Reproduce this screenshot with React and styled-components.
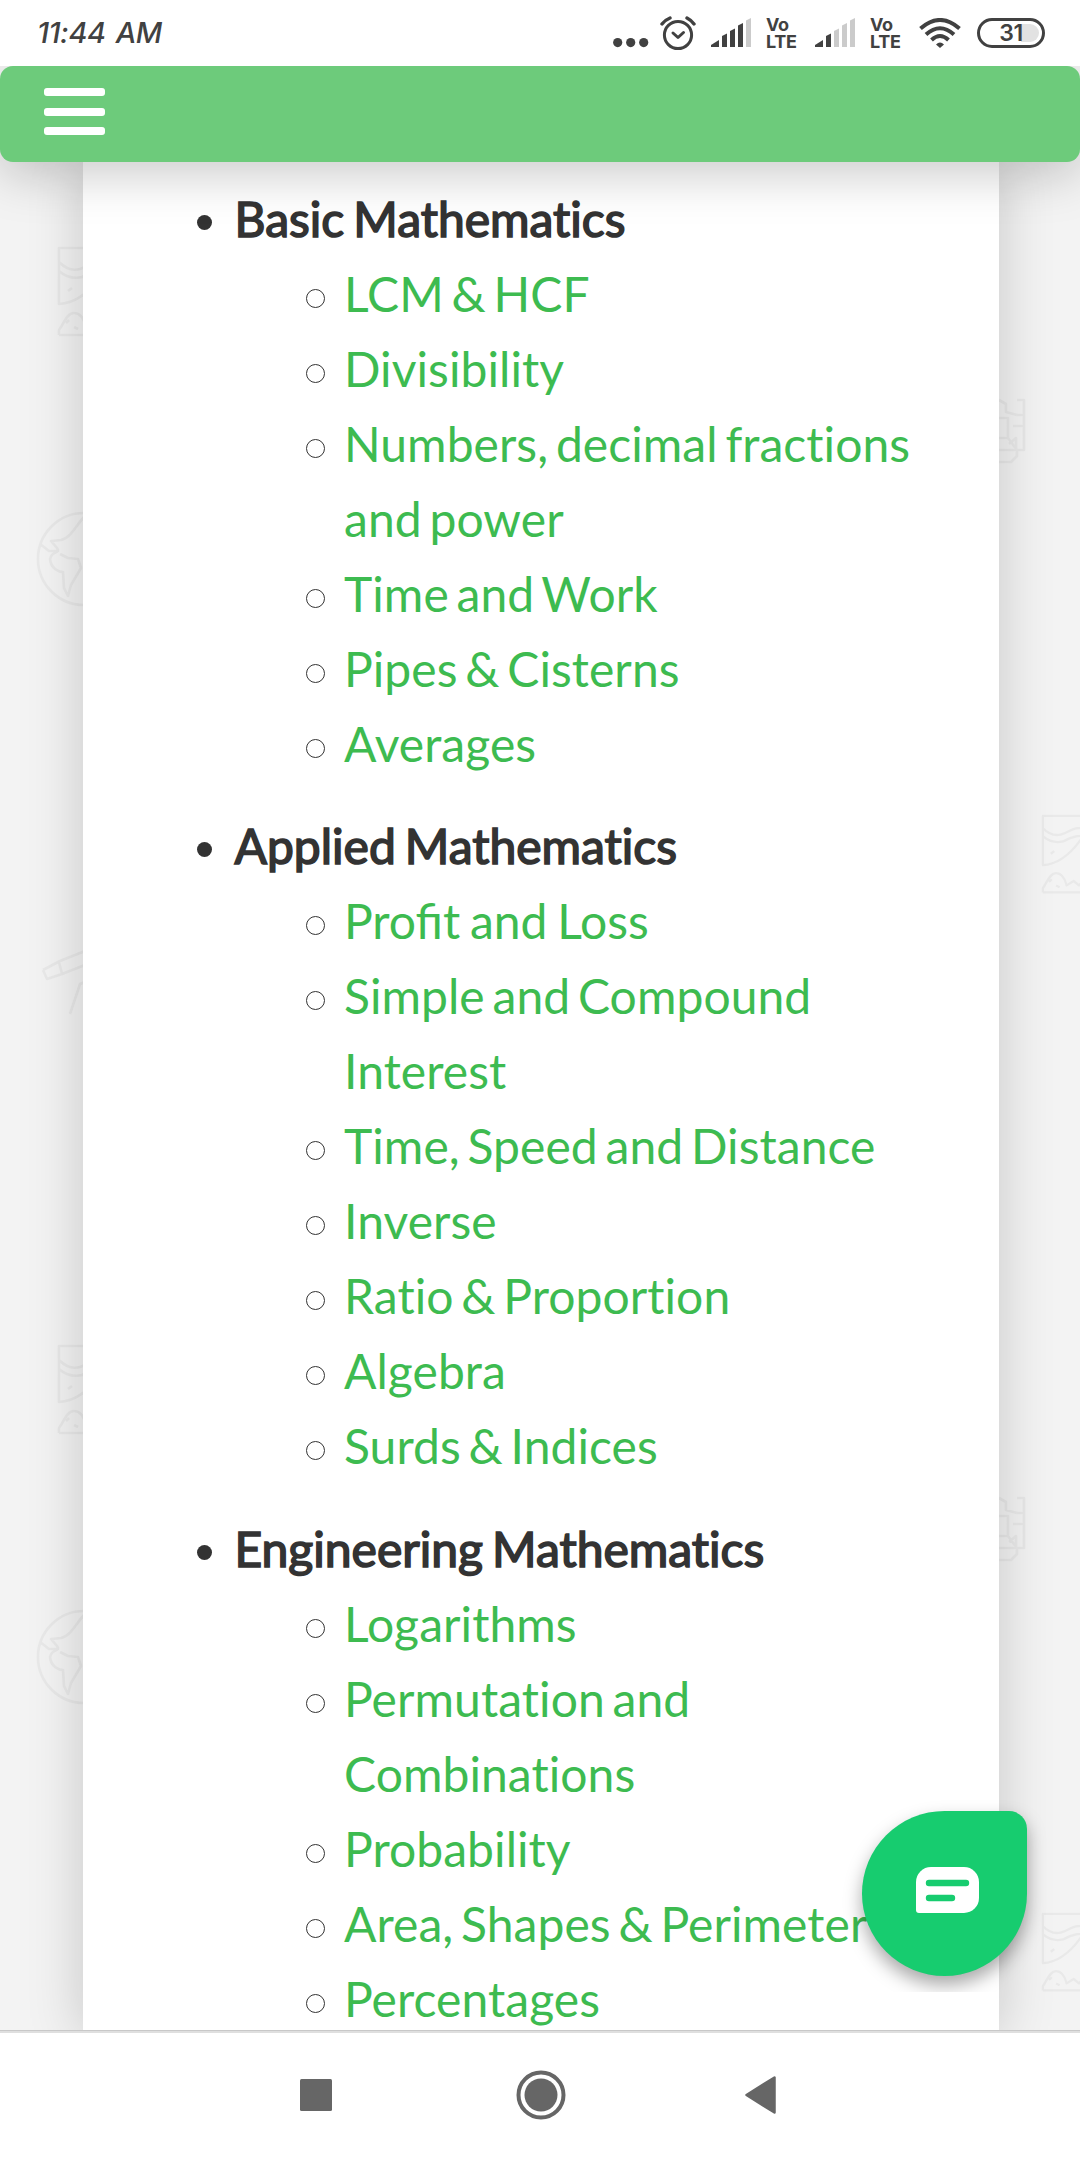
import React from 'react';
import styled, { createGlobalStyle } from 'styled-components';

const GlobalStyle = createGlobalStyle`
  * { box-sizing: border-box; }
  body { margin: 0; background: #fff; font-family: Lato, "Liberation Sans", sans-serif; }
`;

const Screen = styled.div`
  width: 1080px;
  height: 2160px;
  display: flex;
  flex-direction: column;
  overflow: hidden;
  background: #fff;
`;

const StatusBar = styled.div`
  height: 66px;
  flex: none;
  display: flex;
  align-items: flex-start;
  justify-content: space-between;
  padding: 15px 35px 0 37px;
  color: #414141;
`;

const Clock = styled.div`
  font: italic 500 29px/36px Inter, sans-serif;
  letter-spacing: -0.5px;
  word-spacing: 3px;
  white-space: pre;
`;

const Indicators = styled.div`
  display: flex;
  align-items: flex-start;
`;

const Icon = styled.svg`
  display: block;
  flex: none;
  margin-left: ${(p) => p.$gap || 0}px;
  margin-top: ${(p) => p.$drop || 0}px;
`;

const VoLte = styled.div`
  width: 33px;
  margin: 1px 0 0 15px;
  font: 700 18px/17px Inter, sans-serif;
  letter-spacing: -0.3px;
  white-space: nowrap;
`;

const Battery = styled.div`
  width: 68px;
  height: 30px;
  margin: 3px 0 0 16px;
  border: 3px solid #414141;
  border-radius: 15px;
  padding: 3px;
  display: flex;
`;

const Charge = styled.div`
  flex: 1;
  border-radius: 9px;
  background: linear-gradient(90deg, #fff 68%, #e2e2e2 68%);
  text-align: center;
  font: 600 23px/18px Inter, sans-serif;
  letter-spacing: -0.5px;
`;

const Viewport = styled.div`
  position: relative;
  height: 1964px;
  flex: none;
  overflow: hidden;
  display: flex;
  flex-direction: column;
  background: #f3f3f3;
`;

const Backdrop = styled.svg`
  position: absolute;
  inset: 0;
`;

const Header = styled.header`
  position: relative;
  z-index: 2;
  height: 96px;
  flex: none;
  display: flex;
  padding: 22px 44px;
  border-radius: 13px;
  background: #6dcb7b;
  box-shadow: 0 12px 50px rgba(0, 0, 0, 0.21);
`;

const MenuButton = styled.div`
  width: 61px;
  height: 47px;
  display: flex;
  flex-direction: column;
  justify-content: space-between;
`;

const MenuLine = styled.span`
  height: 8px;
  border-radius: 3px;
  background: #fff;
`;

const Card = styled.main`
  position: relative;
  flex: 1;
  margin: 0 81px 0 83px;
  padding: 19px 75px 0 113px;
  background: #fff;
  box-shadow: 0 0 52px rgba(0, 0, 0, 0.19);
`;

const Topics = styled.ul`
  list-style: none;
  margin: 0;
  padding: 0;
  display: flex;
  flex-direction: column;
  gap: 27.4px;
`;

const Topic = styled.li`
  font-size: 48px;
  line-height: 75px;
`;

const TopicTitle = styled.div`
  display: flex;
  color: #333;
  font-variant-ligatures: none;
  word-spacing: -3.2px;
  -webkit-text-stroke: 1.6px #333;
  white-space: nowrap;

  &::before {
    content: '';
    flex: none;
    width: 15px;
    height: 15px;
    margin: 34px 22.5px 0 1px;
    border-radius: 50%;
    background: #333;
  }
`;

const Lessons = styled.ul`
  list-style: none;
  margin: 0;
  padding: 0 0 0 110px;
`;

const Lesson = styled.li`
  display: flex;
  color: #3dbb50;
  letter-spacing: ${(p) => (p.$ligatures ? 'normal' : '0.06px')};
  word-spacing: ${(p) => (p.$ligatures ? '-2.6px' : '-4.6px')};

  &::before {
    content: '';
    flex: none;
    width: 17px;
    height: 17px;
    margin: 33px 19px 0 0;
    border: 1px solid #333;
    border-radius: 50%;
  }
`;

const ChatFrame = styled.div`
  position: absolute;
  z-index: 3;
  right: 23px;
  top: 1715px;
  width: 225px;
  height: 211px;
  padding: 30px;
  overflow: hidden;
`;

const ChatButton = styled.div`
  width: 165px;
  height: 165px;
  display: flex;
  align-items: center;
  justify-content: center;
  padding: 0 0 8px 6px;
  border-radius: 50% 18px 50% 50%;
  background: #17cc6f;
  box-shadow: 0 9px 18px rgba(0, 0, 0, 0.34);
`;

const NavBar = styled.nav`
  flex: 1;
  display: flex;
  align-items: flex-start;
  justify-content: space-between;
  padding: 37px 304px 0 300px;
  border-top: 1px solid #c8c8c8;
  box-shadow: inset 0 2px #dfdfdf;
`;

const NavButton = styled.div`
  height: 54px;
  display: flex;
  align-items: center;
  margin-left: ${(p) => p.$shift || 0}px;
`;

const topics = [
  ['Basic Mathematics', ['LCM & HCF', 'Divisibility', 'Numbers, decimal fractions and power', 'Time and Work', 'Pipes & Cisterns', 'Averages']],
  ['Applied Mathematics', ['Profit and Loss', 'Simple and Compound Interest', 'Time, Speed and Distance', 'Inverse', 'Ratio & Proportion', 'Algebra', 'Surds & Indices']],
  ['Engineering Mathematics', ['Logarithms', 'Permutation and Combinations', 'Probability', 'Area, Shapes & Perimeter', 'Percentages']],
];

const bars = ['0,27 8,22 8,29 0,29', '11,18 16,15.5 16,29 11,29', '19,13 24,10.5 24,29 19,29', '27,7.5 32,5 32,29 27,29', '35,2.5 40,0 40,29 35,29'];

function Signal({ level, gap }) {
  return (
    <Icon $gap={gap} $drop={3} width="40" height="29">
      {bars.map((points, i) => (
        <polygon key={points} points={points} fill={i < level ? '#414141' : '#cbcbcb'} />
      ))}
    </Icon>
  );
}

function Doodles() {
  return (
    <Backdrop width="1080" height="1964" fill="none" stroke="#e9e9e9" strokeWidth="2.6" strokeLinejoin="round">
      <defs>
        <g id="map">
          <path d="M58 1H1V57C20 56 34 42 44 28L52 20M1 15C8 22 15 24 22 22C32 19 37 12 48 16L58 20M1 24C8 30 16 32 24 30C34 25 42 22 58 24" />
          <path d="M1 88V83C6 76 9 66 16 66C23 66 26 72 28 80L36 75L42 80L50 72L58 68M1 88H58M10 44L14 41M8 76L11 73M16 80L20 82" />
        </g>
        <g id="globe">
          <circle cx="47" cy="47" r="46" />
          <path d="M47 5C40 12 34 26 24 28L14 29L20 36C24 42 15 38 13 47C14 57 22 60 26 60L27 76L31 84L34 73L44 56L41 47L31 46L23 42M3 32L12 39L21 39" />
        </g>
        <g id="tower">
          <path d="M0 2L7 6V14L18 17M0 20H9V40H0M18 2H25V52H17V40L10 46M18 17H24M14 28H24M9 40L18 52V58L12 64H0M0 52H16" />
        </g>
      </defs>
      {[0, 1098].map((y) => (
        <g key={y} transform={`translate(0 ${y})`}>
          <use href="#map" x="58" y="181" />
          <use href="#globe" x="37" y="446" />
          <use href="#tower" x="999" y="332" />
          <use href="#map" transform="translate(1042 749) scale(0.88)" />
        </g>
      ))}
      <path d="M43 904L60 895L90 883M43 904L47 913L62 908L59 896M62 908L90 897M90 914L80 918L70 948" />
    </Backdrop>
  );
}

export default function App() {
  return (
    <Screen>
      <GlobalStyle />
      <StatusBar>
        <Clock>11:44 AM</Clock>
        <Indicators>
          <Icon width="36" height="10" $drop={23} fill="#414141">
            <circle cx="4.7" cy="4.6" r="4.6" />
            <circle cx="17.7" cy="4.6" r="4.6" />
            <circle cx="30.7" cy="4.6" r="4.6" />
          </Icon>
          <Icon width="36" height="36" $gap={11} fill="none" stroke="#414141" strokeWidth="3" strokeLinecap="round">
            <circle cx="18" cy="20" r="13.6" />
            <path d="M13 18L18 22.5L23.5 17.5" strokeLinejoin="round" />
            <path d="M2 9Q5 5 10 3M34 9Q31 5 27 3" strokeWidth="3.4" />
          </Icon>
          <Signal level={4} gap={15} />
          <VoLte>Vo<br />LTE</VoLte>
          <Signal level={2} gap={16} />
          <VoLte>Vo<br />LTE</VoLte>
          <Icon width="42" height="31" $gap={16} $drop={3} fill="none" stroke="#414141" strokeWidth="4">
            <path d="M1.5 10.5Q21 -6.5 40.5 10.5" />
            <path d="M7 16.5Q21 4 35 16.5" />
            <path d="M12.5 22Q21 14 29.5 22" />
            <path d="M17 26.5Q21 22.5 25 26.5L21 30Z" fill="#414141" stroke="none" />
          </Icon>
          <Battery><Charge>31</Charge></Battery>
        </Indicators>
      </StatusBar>

      <Viewport>
        <Doodles />
        <Header>
          <MenuButton>
            <MenuLine />
            <MenuLine />
            <MenuLine />
          </MenuButton>
        </Header>
        <Card>
          <Topics>
            {topics.map(([title, lessons]) => (
              <Topic key={title}>
                <TopicTitle>{title}</TopicTitle>
                <Lessons>
                  {lessons.map((lesson) => (
                    <Lesson key={lesson} $ligatures={lesson.includes('fi')}>{lesson}</Lesson>
                  ))}
                </Lessons>
              </Topic>
            ))}
          </Topics>
        </Card>
        <ChatFrame>
          <ChatButton>
            <Icon width="63" height="46">
              <path d="M15 0H48A15 15 0 0 1 63 15V31A15 15 0 0 1 48 46H3A3 3 0 0 1 0 43V15A15 15 0 0 1 15 0Z" fill="#fff" />
              <path d="M13 16H50M13 31H36" stroke="#17cc6f" strokeWidth="6.4" strokeLinecap="round" />
            </Icon>
          </ChatButton>
        </ChatFrame>
      </Viewport>

      <NavBar>
        <NavButton>
          <Icon width="32" height="32"><rect width="32" height="32" rx="1.5" fill="#666" /></Icon>
        </NavButton>
        <NavButton $shift={4}>
          <Icon width="50" height="50">
            <circle cx="25" cy="25" r="22.5" fill="none" stroke="#666" strokeWidth="4" />
            <circle cx="25" cy="25" r="16.5" fill="#666" />
          </Icon>
        </NavButton>
        <NavButton>
          <Icon width="31" height="38">
            <path d="M1.5 19L29.5 1.5V36.5Z" fill="#666" stroke="#666" strokeWidth="2.5" strokeLinejoin="round" />
          </Icon>
        </NavButton>
      </NavBar>
    </Screen>
  );
}
